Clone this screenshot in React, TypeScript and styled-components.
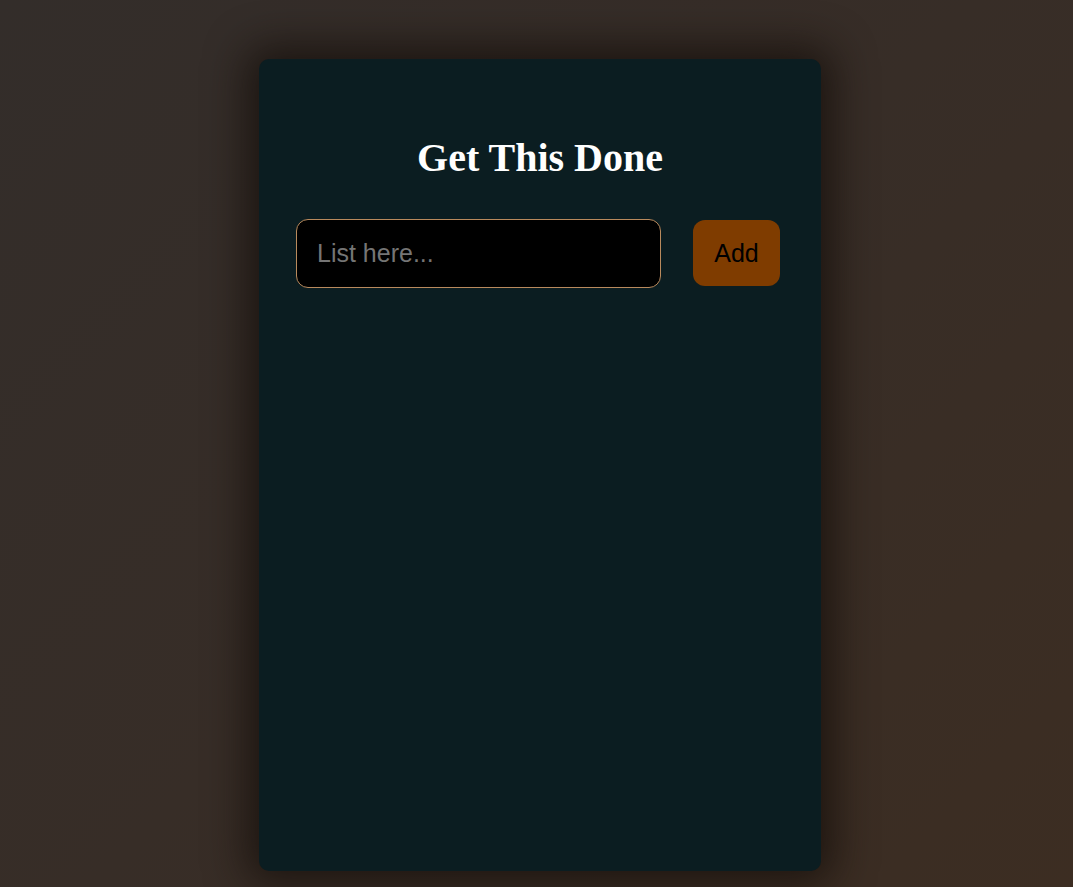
import React, { useState } from "react";
import styled, { createGlobalStyle } from "styled-components";

const GlobalStyle = createGlobalStyle`
  html, body {
    margin: 0;
    padding: 0;
  }
  body {
    min-height: 887px;
    background: linear-gradient(135deg, #332d2a 0%, #372d27 50%, #3c2d22 100%);
    font-family: "Liberation Sans", Arial, sans-serif;
  }
`;

const Page = styled.div`
  display: flex;
  justify-content: center;
  padding: 59px 0 16px 7px;
  box-sizing: border-box;
  min-height: 887px;
`;

const Card = styled.main`
  width: 562px;
  height: 812px;
  box-sizing: border-box;
  background: #0b1d21;
  border-radius: 10px;
  box-shadow: 0 0 40px 12px rgba(20, 14, 10, 0.75);
  padding: 76px 41px 0 37px;
  display: flex;
  flex-direction: column;
`;

const Title = styled.h1`
  margin: 0 0 38px;
  padding-left: 4px;
  text-align: center;
  color: #ffffff;
  font-family: "Liberation Serif", "Times New Roman", serif;
  font-weight: 700;
  font-size: 40px;
  line-height: 46px;
`;

const Form = styled.form`
  display: flex;
  align-items: flex-start;
  justify-content: space-between;
`;

const Input = styled.input`
  width: 365px;
  height: 69px;
  box-sizing: border-box;
  background: #000000;
  border: 1px solid #b98a5d;
  border-radius: 12px;
  padding: 0 20px;
  color: #ffffff;
  font-family: "Liberation Sans", Arial, sans-serif;
  font-size: 25px;
  outline: none;
  &::placeholder {
    color: #757575;
  }
`;

const AddButton = styled.button`
  width: 87px;
  height: 66px;
  margin-top: 1px;
  border: none;
  border-radius: 12px;
  background: #7f3c00;
  color: #000000;
  font-family: "Liberation Sans", Arial, sans-serif;
  font-size: 25px;
  cursor: pointer;
`;

export default function App() {
  const [value, setValue] = useState("");
  return (
    <>
      <GlobalStyle />
      <Page>
        <Card>
          <Title>Get This Done</Title>
          <Form onSubmit={(e) => e.preventDefault()}>
            <Input
              placeholder="List here..."
              value={value}
              onChange={(e) => setValue(e.target.value)}
            />
            <AddButton type="submit">Add</AddButton>
          </Form>
        </Card>
      </Page>
    </>
  );
}
